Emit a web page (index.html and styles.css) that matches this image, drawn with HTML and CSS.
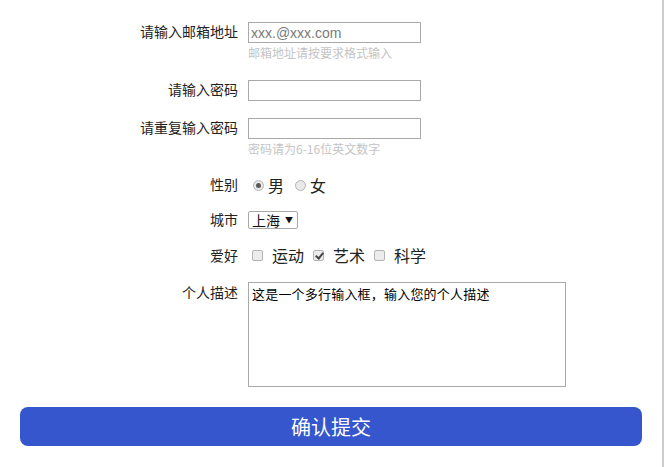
FILE: index.html
```html
<!DOCTYPE html>
<html lang="zh-CN">
<head>
<meta charset="utf-8">
<title>注册表单</title>
<link rel="stylesheet" href="styles.css">
</head>
<body>
<div class="page">
  <form class="form">
    <div class="row">
      <label class="label" for="email">请输入邮箱地址</label>
      <div class="field">
        <input class="text" id="email" type="text" placeholder="xxx.@xxx.com">
        <div class="hint">邮箱地址请按要求格式输入</div>
      </div>
    </div>
    <div class="row">
      <label class="label" for="pwd">请输入密码</label>
      <div class="field">
        <input class="text" id="pwd" type="password">
      </div>
    </div>
    <div class="row">
      <label class="label" for="pwd2">请重复输入密码</label>
      <div class="field">
        <input class="text" id="pwd2" type="password">
        <div class="hint">密码请为6-16位英文数字</div>
      </div>
    </div>
    <div class="row row-gender">
      <span class="label">性别</span>
      <div class="field choices">
        <label class="choice"><input class="radio" type="radio" name="sex" checked><span>男</span></label>
        <label class="choice"><input class="radio" type="radio" name="sex"><span>女</span></label>
      </div>
    </div>
    <div class="row row-city">
      <label class="label" for="city">城市</label>
      <div class="field">
        <span class="select-wrap">
          <select id="city" class="select">
            <option>上海</option>
            <option>北京</option>
            <option>广州</option>
          </select>
          <span class="arrow">▼</span>
        </span>
      </div>
    </div>
    <div class="row row-hobby">
      <span class="label">爱好</span>
      <div class="field choices hobbies">
        <label class="check"><input class="box" type="checkbox"><span>运动</span></label>
        <label class="check"><input class="box" type="checkbox" checked><span>艺术</span></label>
        <label class="check"><input class="box" type="checkbox"><span>科学</span></label>
      </div>
    </div>
    <div class="row row-desc">
      <label class="label" for="desc">个人描述</label>
      <div class="field">
        <textarea id="desc" class="area">这是一个多行输入框，输入您的个人描述</textarea>
      </div>
    </div>
    <button class="submit" type="button">确认提交</button>
  </form>
</div>
</body>
</html>
```

FILE: styles.css
```css
html, body {
  margin: 0;
  padding: 0;
  background: #ffffff;
}

body {
  font-family: "Noto Sans CJK SC", "Noto Sans", sans-serif;
  color: #222222;
}

.page {
  width: 664px;
  min-height: 467px;
  box-sizing: border-box;
  border-right: 2px solid #cccccc;
}

.form {
  padding-top: 22px;
  display: flex;
  flex-direction: column;
  gap: 17px;
}

.row {
  display: grid;
  grid-template-columns: 238px 1fr;
  column-gap: 10px;
  align-items: start;
}

.label {
  text-align: right;
  font-size: 14px;
  line-height: 18px;
  color: #222222;
}

.field {
  display: flex;
  flex-direction: column;
  align-items: flex-start;
}

.text {
  width: 173px;
  height: 21px;
  box-sizing: border-box;
  margin: 0;
  padding: 0 2px;
  border: 1px solid #a9a9a9;
  font-family: "Liberation Sans", Arial, sans-serif;
  font-size: 14px;
  color: #222222;
  outline: none;
}

.text::placeholder {
  color: #7a7a7a;
}

.hint {
  font-size: 12px;
  line-height: 20px;
  color: #c4c4c4;
}

.choices {
  flex-direction: row;
  align-items: center;
}

.row-gender .label {
  line-height: 17px;
}

.row-gender .choices {
  line-height: 18px;
  height: 18px;
}

.row-city .label {
  line-height: 17px;
}

.row-hobby .label {
  line-height: 18px;
}

.row-hobby .choices {
  line-height: 19px;
  height: 19px;
}

.row-desc .label {
  line-height: 20px;
}

.choice,
.check {
  display: flex;
  align-items: center;
  font-size: 16px;
  color: #222222;
}

.choice span,
.check span {
  font-size: 16px;
}

.radio {
  appearance: none;
  -webkit-appearance: none;
  width: 11px;
  height: 11px;
  box-sizing: border-box;
  margin: 0 4px 0 5px;
  border: 1px solid #b4b4b4;
  border-radius: 50%;
  background: #e9e9e9;
  position: relative;
}

.radio:checked::after {
  content: "";
  position: absolute;
  left: 2px;
  top: 2px;
  width: 5px;
  height: 5px;
  border-radius: 50%;
  background: #5a5a5a;
}

.choice + .choice .radio {
  margin-left: 11px;
}

.select-wrap {
  display: flex;
  align-items: center;
  width: 50px;
  height: 18px;
  box-sizing: border-box;
  border: 1px solid #a9a9a9;
  border-radius: 2px;
  background: #ffffff;
  position: relative;
}

.select {
  appearance: none;
  -webkit-appearance: none;
  border: none;
  background: transparent;
  margin: 0;
  padding: 0 0 0 3px;
  width: 100%;
  height: 16px;
  font-family: "Noto Sans CJK SC", sans-serif;
  font-size: 14px;
  line-height: 16px;
  color: #111111;
  outline: none;
}

.arrow {
  position: absolute;
  right: 4px;
  top: 1px;
  font-size: 8px;
  line-height: 14px;
  color: #111111;
  pointer-events: none;
}

.box {
  appearance: none;
  -webkit-appearance: none;
  width: 11px;
  height: 11px;
  box-sizing: border-box;
  margin: 0 9px 0 4px;
  border: 1px solid #b4b4b4;
  border-radius: 2px;
  background: #ececec;
  position: relative;
}

.box:checked::after {
  content: "";
  position: absolute;
  left: 3px;
  top: 0px;
  width: 3px;
  height: 6px;
  border-right: 2px solid #444444;
  border-bottom: 2px solid #444444;
  transform: rotate(40deg);
}

.check + .check .box {
  margin-left: 9px;
}

.area {
  width: 318px;
  height: 105px;
  box-sizing: border-box;
  margin: 0;
  padding: 3px 3px;
  border: 1px solid #a9a9a9;
  font-family: "Noto Sans CJK SC", sans-serif;
  font-size: 13px;
  line-height: 16px;
  letter-spacing: 0.2px;
  color: #000000;
  resize: none;
  outline: none;
}

.submit {
  margin: 3px 0 0 20px;
  width: 622px;
  height: 39px;
  border: none;
  border-radius: 8px;
  background: #3556cc;
  color: #ffffff;
  font-family: "Noto Sans CJK SC", sans-serif;
  font-size: 20px;
  cursor: pointer;
}
```
